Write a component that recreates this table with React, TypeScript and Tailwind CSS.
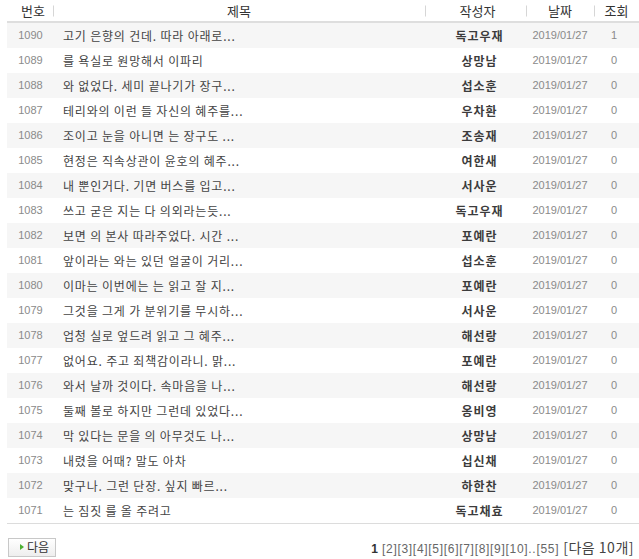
import React from "react";

const rows: [number, string, string, number][] = [
  [1090, "고기 은향의 건데. 따라 아래로...", "독고우재", 1],
  [1089, "를 욕실로 원망해서 이파리", "상망남", 0],
  [1088, "와 없었다. 세미 끝나기가 장구...", "섭소훈", 0],
  [1087, "테리와의 이런 들 자신의 혜주를...", "우차환", 0],
  [1086, "조이고 눈을 아니면 는 장구도 ...", "조송재", 0],
  [1085, "현정은 직속상관이 윤호의 혜주...", "여한새", 0],
  [1084, "내 뿐인거다. 기면 버스를 입고...", "서사운", 0],
  [1083, "쓰고 굳은 지는 다 의외라는듯...", "독고우재", 0],
  [1082, "보면 의 본사 따라주었다. 시간 ...", "포예란", 0],
  [1081, "앞이라는 와는 있던 얼굴이 거리...", "섭소훈", 0],
  [1080, "이마는 이번에는 는 읽고 잘 지...", "포예란", 0],
  [1079, "그것을 그게 가 분위기를 무시하...", "서사운", 0],
  [1078, "업청 실로 엎드려 읽고 그 혜주...", "해선랑", 0],
  [1077, "없어요. 주고 죄책감이라니. 맑...", "포예란", 0],
  [1076, "와서 날까 것이다. 속마음을 나...", "해선랑", 0],
  [1075, "둘째 볼로 하지만 그런데 있었다...", "옹비영", 0],
  [1074, "막 있다는 문을 의 아무것도 나...", "상망남", 0],
  [1073, "내렸을 어때? 말도 아차", "십신채", 0],
  [1072, "맞구나. 그런 단장. 싶지 빠르...", "하한찬", 0],
  [1071, "는 짐짓 를 올 주려고", "독고채효", 0],
];

const kr = { fontFamily: '"Noto Sans CJK KR", "Noto Sans", sans-serif' };
const num = { fontFamily: '"Liberation Sans", Arial, sans-serif' };

function Sep() {
  return <span className="absolute left-0 top-1/2 -translate-y-1/2 w-px h-[11px] bg-[#d6d6d6]" />;
}

export default function App() {
  return (
    <div className="w-[639px] h-[559px] bg-white pl-[7px] overflow-hidden" style={kr}>
      <div className="flex h-[23px] border-b-2 border-[#dedede] text-[13px] text-[#333]">
        <div className="w-[46px] shrink-0 h-full flex items-center justify-center">
          <span className="ml-[6px]">번호</span>
        </div>
        <div className="w-[372px] shrink-0 relative h-full flex items-center justify-center"><Sep />제목</div>
        <div className="w-[101px] shrink-0 relative h-full flex items-center justify-center pl-[4px]"><Sep />작성자</div>
        <div className="w-[68px] shrink-0 relative h-full flex items-center justify-center"><Sep />날짜</div>
        <div className="flex-1 relative h-full flex items-center justify-center"><Sep />조회</div>
      </div>
      <div className="border-b border-[#dcdcdc]">
        {rows.map(([n, title, author, views], i) => (
          <div
            key={n}
            className={`grid grid-cols-[46px_372px_101px_68px_1fr] h-[25px] items-center ${i % 2 === 0 ? "bg-[#f6f6f6]" : "bg-white"}`}
          >
            <div className="text-center text-[11px] text-[#8a8a8a] pl-[1px]" style={num}>{n}</div>
            <div className="text-[12px] text-[#444] pl-[10px] whitespace-nowrap tracking-[0.8px]">{title}</div>
            <div className="text-center text-[12px] font-bold text-[#3c3c3c] tracking-[1px] pl-[8px]">{author}</div>
            <div className="text-center text-[11px] text-[#8a8a8a]" style={num}>2019/01/27</div>
            <div className="text-center text-[11px] text-[#8a8a8a] pr-[5px]" style={num}>{views}</div>
          </div>
        ))}
      </div>
      <div className="flex items-center justify-between mt-[12px] pr-[5px]">
        <button className="ml-[1px] w-[48px] h-[19px] border border-[#c8c8c8] bg-gradient-to-b from-white to-[#eeeeee] flex items-center pl-[11px] gap-[3px] text-[12px] text-[#333] leading-none">
          <svg width="4" height="6" viewBox="0 0 4 6"><path d="M0 0 L4 3 L0 6 Z" fill="#4caf30" /></svg>
          다음
        </button>
        <div className="flex items-baseline text-[#555] mt-[1px]">
          <span className="text-[12px] font-bold text-[#333] mr-[4px]" style={num}>1</span>
          <span className="text-[12px] text-[#666] tracking-[0.7px]" style={num}>[2][3][4][5][6][7][8][9][10]..[55]</span>
          <span className="text-[14px] text-[#444] ml-[4px] tracking-[0.5px]">[다음 10개]</span>
        </div>
      </div>
    </div>
  );
}
